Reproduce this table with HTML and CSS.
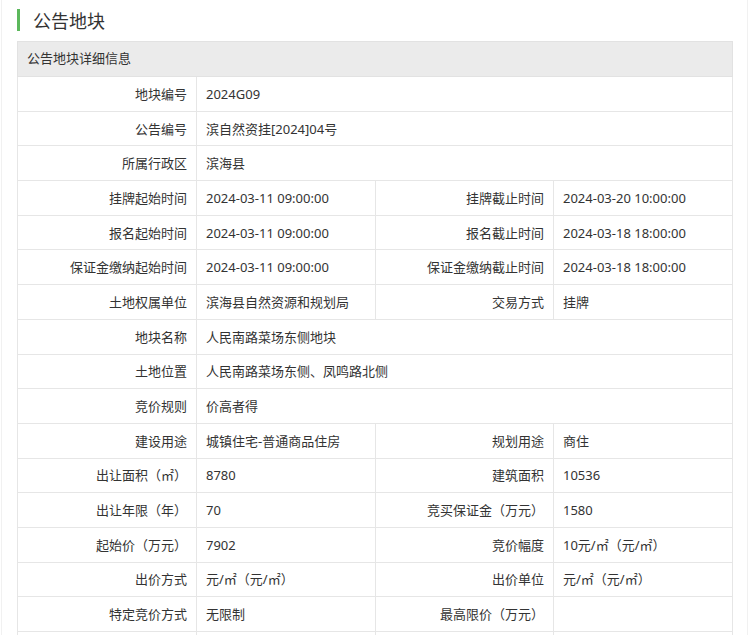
FILE: index.html
```html
<!DOCTYPE html>
<html lang="zh-CN">
<head>
<meta charset="utf-8">
<title>公告地块</title>
<link rel="stylesheet" href="styles.css">
</head>
<body>
<div class="page">
  <h2 class="title">公告地块</h2>
  <table class="info">
    <colgroup>
      <col class="c1"><col class="c2"><col class="c3"><col class="c4">
    </colgroup>
    <thead>
      <tr><th colspan="4">公告地块详细信息</th></tr>
    </thead>
    <tbody>
      <tr><td class="lb">地块编号</td><td colspan="3">2024G09</td></tr>
      <tr><td class="lb">公告编号</td><td colspan="3">滨自然资挂[2024]04号</td></tr>
      <tr><td class="lb">所属行政区</td><td colspan="3">滨海县</td></tr>
      <tr><td class="lb">挂牌起始时间</td><td>2024-03-11 09:00:00</td><td class="lb">挂牌截止时间</td><td>2024-03-20 10:00:00</td></tr>
      <tr><td class="lb">报名起始时间</td><td>2024-03-11 09:00:00</td><td class="lb">报名截止时间</td><td>2024-03-18 18:00:00</td></tr>
      <tr><td class="lb">保证金缴纳起始时间</td><td>2024-03-11 09:00:00</td><td class="lb">保证金缴纳截止时间</td><td>2024-03-18 18:00:00</td></tr>
      <tr><td class="lb">土地权属单位</td><td>滨海县自然资源和规划局</td><td class="lb">交易方式</td><td>挂牌</td></tr>
      <tr><td class="lb">地块名称</td><td colspan="3">人民南路菜场东侧地块</td></tr>
      <tr><td class="lb">土地位置</td><td colspan="3">人民南路菜场东侧、凤鸣路北侧</td></tr>
      <tr><td class="lb">竞价规则</td><td colspan="3">价高者得</td></tr>
      <tr><td class="lb">建设用途</td><td>城镇住宅-普通商品住房</td><td class="lb">规划用途</td><td>商住</td></tr>
      <tr><td class="lb">出让面积（㎡）</td><td>8780</td><td class="lb">建筑面积</td><td>10536</td></tr>
      <tr><td class="lb">出让年限（年）</td><td>70</td><td class="lb">竞买保证金（万元）</td><td>1580</td></tr>
      <tr><td class="lb">起始价（万元）</td><td>7902</td><td class="lb">竞价幅度</td><td>10元/㎡（元/㎡）</td></tr>
      <tr><td class="lb">出价方式</td><td>元/㎡（元/㎡）</td><td class="lb">出价单位</td><td>元/㎡（元/㎡）</td></tr>
      <tr><td class="lb">特定竞价方式</td><td>无限制</td><td class="lb">最高限价（万元）</td><td></td></tr>
      <tr><td class="lb">&nbsp;</td><td></td><td class="lb"></td><td></td></tr>
    </tbody>
  </table>
</div>
</body>
</html>
```

FILE: styles.css
```css
html, body {
  margin: 0;
  padding: 0;
  background: #fff;
}
body {
  font-family: "Noto Sans", "Noto Sans CJK SC", sans-serif;
  color: #333;
  font-size: 13px;
}
.page {
  width: 747px;
  margin-left: 1px;
  border-left: 1px solid #f1f1f1;
  border-right: 1px solid #f1f1f1;
  padding: 9px 16px 0 15px;
  box-sizing: border-box;
  height: 640px;
  overflow: hidden;
}
.title {
  margin: 0;
  height: 22px;
  line-height: 22px;
  border-left: 3px solid #5cb85c;
  padding-left: 13px;
  font-size: 18px;
  font-weight: normal;
  color: #333;
  font-family: "Noto Sans CJK SC", sans-serif;
}
.info {
  margin-top: 10px;
  width: 716px;
  border-collapse: collapse;
  table-layout: fixed;
}
.c1, .c2, .c4 { width: 179px; }
.c3 { width: 178px; }
.info th {
  background: #ebebeb;
  text-align: left;
  font-weight: normal;
  height: 35px;
  padding: 0 9px 3px;
  border: 1px solid #e2e2e2;
  box-sizing: border-box;
  line-height: 18px;
}
.info td {
  height: 34.7px;
  padding: 0 9px;
  border: 1px solid #e6e6e6;
  box-sizing: border-box;
  vertical-align: middle;
  white-space: nowrap;
  line-height: 18px;
}
.info td.lb {
  text-align: right;
}
```
